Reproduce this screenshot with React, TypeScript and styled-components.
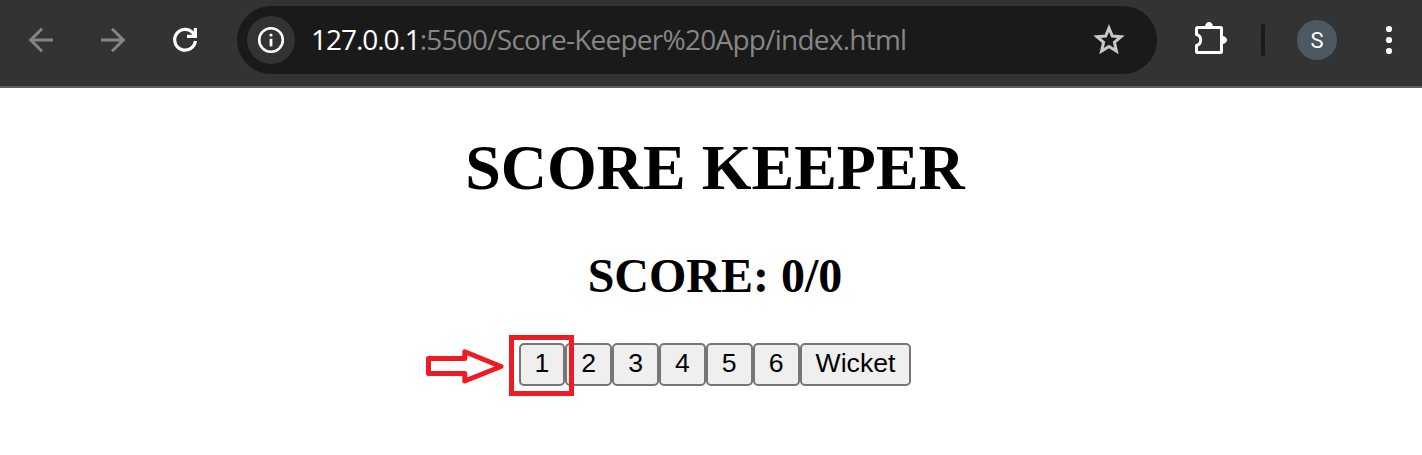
import React, { useState } from "react";
import styled, { createGlobalStyle } from "styled-components";

const GlobalStyle = createGlobalStyle`
  * { box-sizing: border-box; }
  body { margin: 0; background: #fff; overflow: hidden; }
`;

const Window = styled.div`
  width: 1422px;
  height: 455px;
  overflow: hidden;
  background: #fff;
`;

const Toolbar = styled.header`
  display: flex;
  align-items: center;
  height: 88px;
  padding: 0 13px 6px 21px;
  background: #333333;
  border-bottom: 2px solid #5f5f5f;
`;

const NavGroup = styled.nav`
  display: flex;
  gap: 32px;
  margin-right: 32px;
`;

const IconSlot = styled.span<{ $color?: string }>`
  display: flex;
  flex: none;
  width: 40px;
  height: 40px;
  color: ${(p) => p.$color ?? "#ffffff"};
`;

const AddressBar = styled.div`
  display: flex;
  align-items: center;
  width: 920px;
  height: 68px;
  padding: 0 28px 0 10px;
  border-radius: 34px;
  background: #1a1a1a;
`;

const SiteInfo = styled.span`
  display: flex;
  align-items: center;
  justify-content: center;
  width: 48px;
  height: 48px;
  margin-right: 16px;
  border-radius: 50%;
  background: #333333;
  color: #fff;
`;

const Url = styled.div`
  flex: 1;
  display: flex;
  padding-bottom: 2px;
  white-space: nowrap;
  font: 28px/40px "Open Sans", "Noto Sans", sans-serif;
`;

const Host = styled.span`
  color: #ffffff;
  letter-spacing: -1.05px;
`;

const Path = styled.span`
  color: #868686;
  letter-spacing: -0.75px;
`;

const Actions = styled.div`
  display: flex;
  align-items: center;
  margin-left: 33px;
`;

const Divider = styled.span`
  width: 4px;
  height: 32px;
  margin: 0 32px 0 31px;
  border-radius: 2px;
  background: #1a1a1a;
`;

const Avatar = styled.span`
  width: 40px;
  height: 40px;
  margin-right: 32px;
  border-radius: 50%;
  background: #4c5963;
  color: #fff;
  text-align: center;
  font: 22px/41px Roboto, sans-serif;
`;

const Page = styled.main`
  display: flex;
  flex-direction: column;
  align-items: center;
  width: 1430px;
  padding-top: 43px;
  color: #000;
`;

const Title = styled.h1`
  margin: 0 0 40px;
  font: bold 64px/73px "Liberation Serif", serif;
`;

const Score = styled.h2`
  margin: 5px 0 40px;
  font: bold 48px/54px "Liberation Serif", serif;
`;

const Controls = styled.div`
  position: relative;
  display: flex;
`;

const ScoreButton = styled.button`
  height: 43px;
  margin: 0;
  padding: 0 14px 2px;
  border: 2px solid #767676;
  border-radius: 5px;
  background: #efefef;
  color: #000;
  font: 26.667px/37px "Liberation Sans", sans-serif;
`;

const Highlight = styled.span`
  position: absolute;
  left: -10px;
  top: -8px;
  width: 65px;
  height: 61px;
  border: 5px solid #ed1c24;
  pointer-events: none;
`;

const Pointer = styled.svg`
  position: absolute;
  left: -94px;
  top: 4px;
`;

const BackIcon = () => (
  <svg width="40" height="40" fill="none" stroke="currentColor" strokeWidth="3">
    <path d="M32 20H10M21 8.7 9.7 20 21 31.3" />
  </svg>
);

const ForwardIcon = () => (
  <svg width="40" height="40" fill="none" stroke="currentColor" strokeWidth="3">
    <path d="M8 20h22M19 8.7 30.3 20 19 31.3" />
  </svg>
);

const ReloadIcon = () => (
  <svg width="40" height="40" fill="none" stroke="currentColor" strokeWidth="3.2">
    <path d="M30.4 21A10.4 10.4 0 1 1 28 13L30 16M30.4 8v8.4H22" />
  </svg>
);

const InfoIcon = () => (
  <svg width="28" height="28" fill="none" stroke="currentColor">
    <circle cx="14" cy="14" r="11.8" strokeWidth="2.6" />
    <path d="M14 12.8v7.6" strokeWidth="2.8" />
    <circle cx="14" cy="9" r="1.6" fill="currentColor" stroke="none" />
  </svg>
);

const StarIcon = () => (
  <svg width="40" height="40" fill="none" stroke="currentColor" strokeWidth="3">
    <path d="M20 8 23.3 16 32 16.7 25.4 22.4 27.4 31 20 26.4 12.6 31 14.6 22.4 8 16.7 16.7 16Z" />
  </svg>
);

const PuzzleIcon = () => (
  <svg width="40" height="40" fill="none" stroke="currentColor" strokeWidth="3">
    <path
      strokeLinejoin="round"
      d="M8 7.5H30.5Q31.5 7.5 31.5 8.5V31.5Q31.5 32.5 30.5 32.5H7.5Q6.5 32.5 6.5 31.5V25.5A5.7 5.7 0 0 0 6.5 14.5V8.5Q6.5 7.5 8 7.5Z"
    />
    <path stroke="none" fill="currentColor" d="M15 7a4 5 0 0 1 8 0ZM32 16a5 4 0 0 1 0 8Z" />
  </svg>
);

const MenuIcon = () => (
  <svg width="40" height="40" fill="currentColor">
    <circle cx="20" cy="9" r="3.1" />
    <circle cx="20" cy="20" r="3.1" />
    <circle cx="20" cy="31" r="3.1" />
  </svg>
);

export default function App() {
  const [runs, setRuns] = useState(0);
  const [wickets, setWickets] = useState(0);

  return (
    <Window>
      <GlobalStyle />
      <Toolbar>
        <NavGroup>
          <IconSlot $color="#858585"><BackIcon /></IconSlot>
          <IconSlot $color="#858585"><ForwardIcon /></IconSlot>
          <IconSlot><ReloadIcon /></IconSlot>
        </NavGroup>
        <AddressBar>
          <SiteInfo><InfoIcon /></SiteInfo>
          <Url>
            <Host>127.0.0.1</Host>
            <Path>:5500/Score-Keeper%20App/index.html</Path>
          </Url>
          <IconSlot $color="#c7c7c7"><StarIcon /></IconSlot>
        </AddressBar>
        <Actions>
          <IconSlot><PuzzleIcon /></IconSlot>
          <Divider />
          <Avatar>S</Avatar>
          <IconSlot><MenuIcon /></IconSlot>
        </Actions>
      </Toolbar>
      <Page>
        <Title>SCORE KEEPER</Title>
        <Score>SCORE: {runs}/{wickets}</Score>
        <Controls>
          {[1, 2, 3, 4, 5, 6].map((n) => (
            <ScoreButton key={n} onClick={() => setRuns(runs + n)}>{n}</ScoreButton>
          ))}
          <ScoreButton onClick={() => setWickets(wickets + 1)}>Wicket</ScoreButton>
          <Highlight />
          <Pointer width="82" height="40" fill="none" stroke="#ed1c24" strokeWidth="5">
            <path d="M3.5 11.5H39.8V4.8L76 19.5 39.8 34V26.5H3.5Z" strokeLinejoin="round" />
          </Pointer>
        </Controls>
      </Page>
    </Window>
  );
}
